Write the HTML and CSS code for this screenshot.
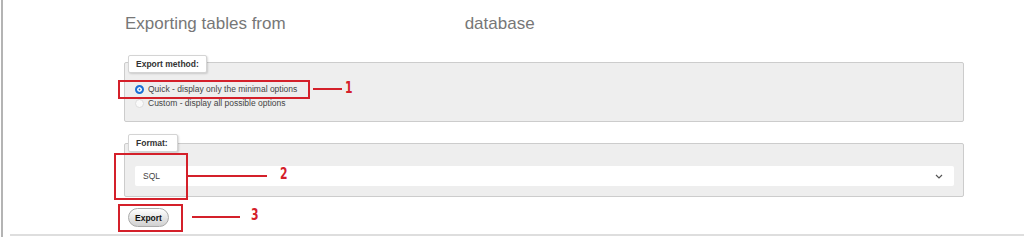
FILE: index.html
```html
<!DOCTYPE html>
<html>
<head>
<meta charset="utf-8">
<link rel="stylesheet" href="styles.css">
</head>
<body>
<div class="page">
  <div class="content">
    <h2 class="title"><span>Exporting tables from</span><span class="db">database</span></h2>

    <div class="fieldset fs-method">
      <div class="legend">Export method:</div>
      <div class="option"><span class="radio checked"></span><span>Quick - display only the minimal options</span></div>
      <div class="option"><span class="radio"></span><span>Custom - display all possible options</span></div>
    </div>

    <div class="fieldset fs-format">
      <div class="legend">Format:</div>
      <div class="select">
        <span>SQL</span>
        <svg class="chev" width="8" height="5" viewBox="0 0 8 5"><polyline points="1,1 4,4 7,1" fill="none" stroke="#555" stroke-width="1.2"/></svg>
      </div>
    </div>

    <button class="btn">Export</button>
  </div>
  <div class="rule"></div>
</div>

<div class="annot box1"></div>
<div class="annot line line1"></div>
<div class="num num1">1</div>

<div class="annot box2"></div>
<div class="annot line line2"></div>
<div class="num num2">2</div>

<div class="annot box3"></div>
<div class="annot line line3"></div>
<div class="num num3">3</div>
</body>
</html>
```

FILE: styles.css
```css
* { box-sizing: border-box; }
html, body { margin: 0; padding: 0; background: #fff; }
body {
  position: relative;
  width: 1024px;
  height: 237px;
  overflow: hidden;
  font-family: "Liberation Sans", Arial, sans-serif;
}
.page {
  margin-left: 1px;
  border-left: 2px solid #b4b4b4;
  height: 237px;
  padding-top: 14px;
}
.content {
  padding-left: 121px;
  padding-right: 58px;
}
.title {
  margin: 0;
  font-weight: normal;
  font-size: 17px;
  line-height: 20px;
  color: #777;
  padding-left: 1px;
  display: flex;
}
.title .db { margin-left: 179px; }

.fieldset {
  background: #eee;
  border: 1px solid #ccc;
  border-radius: 2px;
  width: 840px;
}
.fs-method {
  margin-top: 28px;
  height: 60px;
  padding: 0 0 0 10px;
}
.fs-format {
  margin-top: 21px;
  height: 54px;
  padding: 0 9px 0 10px;
}
.legend {
  width: fit-content;
  white-space: nowrap;
  background: #fff;
  border: 1px solid #d4d4d4;
  border-radius: 2px;
  box-shadow: 1px 1px 2px rgba(0,0,0,0.15);
  font-size: 8.5px;
  font-weight: bold;
  color: #333;
  line-height: 16px;
  height: 18px;
  padding: 0 7px;
}
.fs-method .legend { margin: -8px 0 9px -7px; }
.fs-format .legend { margin: -10px 0 14px -7px; padding-right: 9px; }

.option {
  display: flex;
  align-items: center;
  height: 14px;
  font-size: 8.5px;
  color: #444;
}
.radio {
  width: 9px;
  height: 9px;
  border-radius: 50%;
  border: 1px solid #ddd;
  background: #fafafa;
  margin-right: 4px;
  flex: none;
}
.radio.checked {
  border: 2px solid #1a6fd6;
  background: #1a6fd6;
  box-shadow: inset 0 0 0 1.6px #fff;
}

.select {
  height: 20px;
  background: #fff;
  border-radius: 2px;
  display: flex;
  align-items: center;
  justify-content: space-between;
  padding: 0 11px 0 8px;
  font-size: 8.5px;
  color: #444;
}
.chev { display: block; }

.btn {
  display: block;
  margin: 11px 0 0 4px;
  height: 19px;
  width: 41px;
  padding: 0;
  border: 1px solid #aaa;
  border-radius: 10px;
  background: linear-gradient(#ffffff, #d0d0d0);
  font-family: "Liberation Sans", Arial, sans-serif;
  font-size: 8.5px;
  font-weight: bold;
  color: #111;
}
.rule {
  margin-top: 7px;
  margin-left: 7px;
  border-top: 2px solid #dedede;
}

.annot { position: absolute; border: 2px solid #d4202a; }
.line { border: none; height: 2px; background: #d4202a; }
.box1 { left: 118px; top: 80px; width: 192px; height: 19px; }
.line1 { left: 313px; top: 88px; width: 29px; }
.box2 { left: 114px; top: 153px; width: 74px; height: 47px; }
.line2 { left: 187px; top: 175px; width: 80px; }
.box3 { left: 118px; top: 204px; width: 65px; height: 28px; }
.line3 { left: 192px; top: 216px; width: 48px; }
.num {
  position: absolute;
  font-family: "DejaVu Sans Condensed", "DejaVu Sans", sans-serif;
  font-weight: bold;
  font-size: 15px;
  line-height: 16px;
  color: #d4202a;
  transform: scaleX(0.8);
  transform-origin: left center;
}
.num1 { left: 345px; top: 80px; }
.num2 { left: 280px; top: 166px; }
.num3 { left: 251px; top: 207px; }
```
